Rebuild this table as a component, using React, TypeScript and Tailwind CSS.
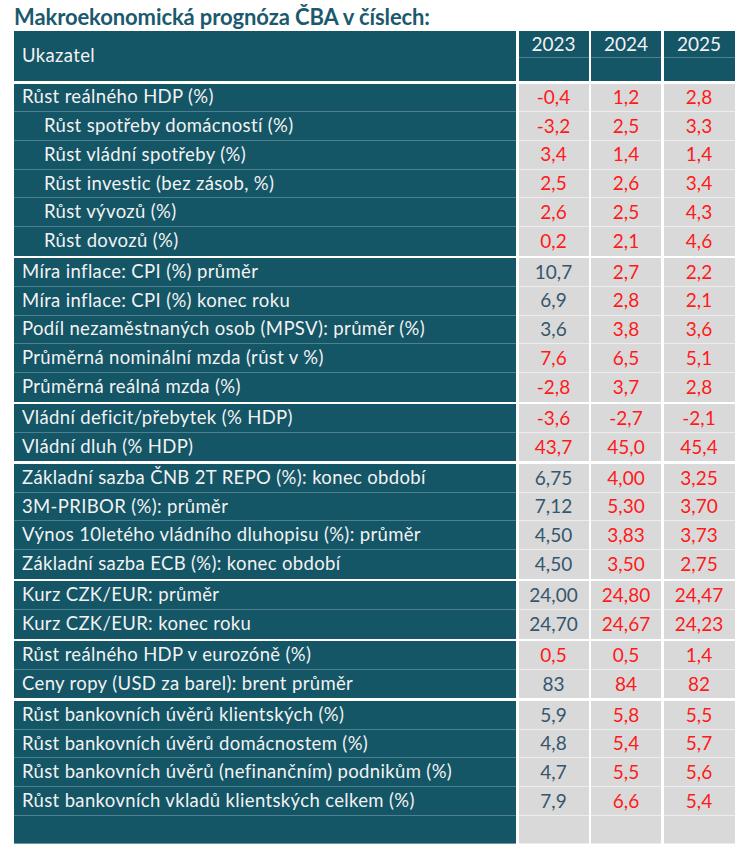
import React from "react";

// Řádek tabulky: popisek, odsazení a hodnoty pro 2023–2025
type Cell = { v: string; red?: boolean };
type Row = { label: string; indent?: boolean; values: Cell[] };

const r = (v: string): Cell => ({ v, red: true });
const b = (v: string): Cell => ({ v });

const groups: Row[][] = [
  [
    { label: "Růst reálného HDP (%)", values: [r("-0,4"), r("1,2"), r("2,8")] },
    { label: "Růst spotřeby domácností (%)", indent: true, values: [r("-3,2"), r("2,5"), r("3,3")] },
    { label: "Růst vládní spotřeby (%)", indent: true, values: [r("3,4"), r("1,4"), r("1,4")] },
    { label: "Růst investic (bez zásob, %)", indent: true, values: [r("2,5"), r("2,6"), r("3,4")] },
    { label: "Růst vývozů (%)", indent: true, values: [r("2,6"), r("2,5"), r("4,3")] },
    { label: "Růst dovozů (%)", indent: true, values: [r("0,2"), r("2,1"), r("4,6")] },
  ],
  [
    { label: "Míra inflace: CPI (%) průměr", values: [b("10,7"), r("2,7"), r("2,2")] },
    { label: "Míra inflace: CPI (%) konec roku", values: [b("6,9"), r("2,8"), r("2,1")] },
    { label: "Podíl nezaměstnaných osob (MPSV): průměr (%)", values: [b("3,6"), r("3,8"), r("3,6")] },
    { label: "Průměrná nominální mzda (růst v %)", values: [r("7,6"), r("6,5"), r("5,1")] },
    { label: "Průměrná reálná mzda (%)", values: [r("-2,8"), r("3,7"), r("2,8")] },
  ],
  [
    { label: "Vládní deficit/přebytek (% HDP)", values: [r("-3,6"), r("-2,7"), r("-2,1")] },
    { label: "Vládní dluh (% HDP)", values: [r("43,7"), r("45,0"), r("45,4")] },
  ],
  [
    { label: "Základní sazba ČNB 2T REPO (%): konec období", values: [b("6,75"), r("4,00"), r("3,25")] },
    { label: "3M-PRIBOR (%): průměr", values: [b("7,12"), r("5,30"), r("3,70")] },
    { label: "Výnos 10letého vládního dluhopisu (%): průměr", values: [b("4,50"), r("3,83"), r("3,73")] },
    { label: "Základní sazba ECB (%): konec období", values: [b("4,50"), r("3,50"), r("2,75")] },
  ],
  [
    { label: "Kurz CZK/EUR: průměr", values: [b("24,00"), r("24,80"), r("24,47")] },
    { label: "Kurz CZK/EUR: konec roku", values: [b("24,70"), r("24,67"), r("24,23")] },
  ],
  [
    { label: "Růst reálného HDP v eurozóně (%)", values: [r("0,5"), r("0,5"), r("1,4")] },
    { label: "Ceny ropy (USD za barel): brent průměr", values: [b("83"), r("84"), r("82")] },
  ],
  [
    { label: "Růst bankovních úvěrů klientských (%)", values: [b("5,9"), r("5,8"), r("5,5")] },
    { label: "Růst bankovních úvěrů domácnostem (%)", values: [b("4,8"), r("5,4"), r("5,7")] },
    { label: "Růst bankovních úvěrů (nefinančním) podnikům (%)", values: [b("4,7"), r("5,5"), r("5,6")] },
    { label: "Růst bankovních vkladů klientských celkem (%)", values: [b("7,9"), r("6,6"), r("5,4")] },
    { label: "", values: [b(""), b(""), b("")] },
  ],
];

const colW = ["w-[70px]", "w-[70px]", "w-[71px]"];

const App: React.FC = () => {
  return (
    <div
      className="w-[746px] h-[864px] bg-white pl-[14px] pt-[3px]"
      style={{ fontFamily: "Lato, 'Open Sans', sans-serif" }}
    >
      <h1 className="text-[22px] leading-[27px] font-bold text-[#1b5a6e] tracking-[-0.1px]">
        Makroekonomická prognóza ČBA v číslech:
      </h1>

      {/* Hlavička */}
      <div className="mt-[1px] flex gap-[2.5px] h-[50px]">
        <div className="w-[502px] bg-[#145566] flex items-center pl-[8px] text-[18.5px] tracking-[0.35px] text-[#f2f2f2]">
          Ukazatel
        </div>
        {["2023", "2024", "2025"].map((y, i) => (
          <div key={y} className={`${colW[i]} bg-[#145566] flex flex-col`}>
            <div className="h-[27px] border-b border-[#4d8090] flex items-center justify-center text-[19px] text-[#f2f2f2]">
              {y}
            </div>
          </div>
        ))}
      </div>

      {/* Skupiny řádků */}
      {groups.map((rows, gi) => (
        <div key={gi} className="mt-[2.5px]">
          {rows.map((row, ri) => {
            const last = ri === rows.length - 1;
            const isEnd = gi === groups.length - 1 && last;
            return (
              <div key={ri} className="flex gap-[2.5px] h-[28.7px]">
                <div
                  className={`w-[502px] bg-[#145566] flex items-center text-[18.5px] tracking-[0.35px] text-[#f2f2f2] whitespace-nowrap ${
                    row.indent ? "pl-[30px]" : "pl-[8px]"
                  } ${last ? (isEnd ? "border-b border-[#6f96a3]" : "") : "border-b border-[#4d8090]"}`}
                >
                  {row.label}
                </div>
                {row.values.map((c, ci) => (
                  <div
                    key={ci}
                    className={`${colW[ci]} bg-[#d9d9d9] flex items-center justify-center text-[19px] ${
                      c.red ? "text-[#ff1a1a]" : "text-[#36566e]"
                    } ${last ? (isEnd ? "border-b border-[#ececec]" : "") : "border-b border-[#ededed]"}`}
                  >
                    {c.v}
                  </div>
                ))}
              </div>
            );
          })}
        </div>
      ))}
    </div>
  );
};

export default App;
